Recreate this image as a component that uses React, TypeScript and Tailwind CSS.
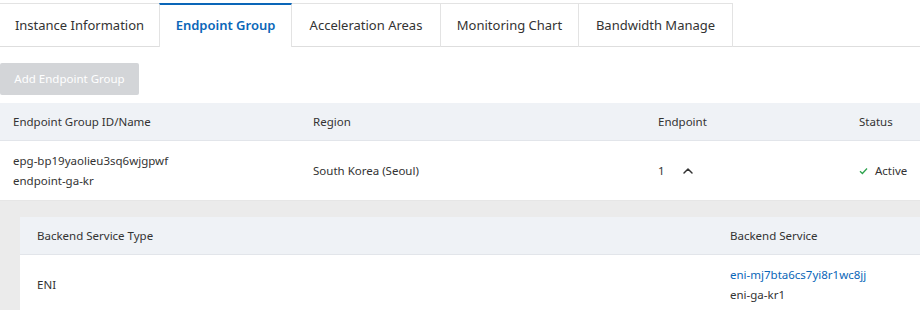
import { ChevronUp } from 'lucide-react';

const TABS = [
  { label: 'Instance Information', w: 'w-[159px]' },
  { label: 'Endpoint Group', w: 'w-[133px]' },
  { label: 'Acceleration Areas', w: 'w-[149px]' },
  { label: 'Monitoring Chart', w: 'w-[138px]' },
  { label: 'Bandwidth Manage', w: 'w-[154px]' },
];

export default function App() {
  const active = 1;

  return (
    <div className="w-[920px] h-[310px] overflow-hidden bg-white text-[#333] font-['Noto_Sans','Open_Sans',sans-serif]">
      {/* Tabs */}
      <div className="flex pt-[3px] border-b border-[#dedede] h-[47px]">
        {TABS.map((tab, i) => (
          <div
            key={tab.label}
            className={`${tab.w} h-[44px] flex items-center justify-center text-[13px] border-r border-[#e3e3e3] ${
              i === active
                ? 'border-t-2 border-t-[#0a66b8] text-[#0a66b8] font-semibold bg-white h-[44px] -mb-px border-l border-l-[#e3e3e3]'
                : 'border-t border-t-[#e3e3e3]'
            } ${i === active - 1 ? 'border-r-0' : ''}`}
          >
            {tab.label}
          </div>
        ))}
      </div>

      {/* Toolbar */}
      <div className="pt-4 pb-2">
        <button className="w-[139px] h-[32px] rounded-[2px] bg-[#d3d5d8] text-white text-[11.5px]">
          Add Endpoint Group
        </button>
      </div>

      {/* Main table */}
      <div className="text-[11.5px]">
        <div className="flex items-center h-[38px] bg-[#eff2f6] border-b border-[#e2e5ea]">
          <div className="w-[300px] pl-[13px]">Endpoint Group ID/Name</div>
          <div className="w-[345px] pl-[13px]">Region</div>
          <div className="w-[201px] pl-[13px]">Endpoint</div>
          <div className="flex-1 pl-[13px]">Status</div>
        </div>
        <div className="flex items-center h-[60px] border-b border-[#e6e6e6]">
          <div className="w-[300px] pl-[13px] leading-[20px]">
            <div>epg-bp19yaolieu3sq6wjgpwf</div>
            <div>endpoint-ga-kr</div>
          </div>
          <div className="w-[345px] pl-[13px]">South Korea (Seoul)</div>
          <div className="w-[201px] pl-[13px] flex items-center gap-[15px]">
            <span>1</span>
            <ChevronUp size={16} strokeWidth={2.2} className="text-[#333]" />
          </div>
          <div className="flex-1 pl-[13px] flex items-center gap-[7px]">
            <svg width="9" height="8" viewBox="0 0 9 8" fill="none">
              <path d="M1 4.2 L3.4 6.5 L8 1.5" stroke="#2ea44f" strokeWidth="1.3" />
            </svg>
            <span>Active</span>
          </div>
        </div>

        {/* Expanded area */}
        <div className="bg-[#ebebeb] pl-[20px] pt-[16px] h-[120px]">
          <div className="w-[920px] bg-white">
            <div className="flex items-center h-[38px] bg-[#eff2f6] border-b border-[#e2e5ea]">
              <div className="w-[693px] pl-[17px]">Backend Service Type</div>
              <div className="flex-1 pl-[17px]">Backend Service</div>
            </div>
            <div className="flex items-center h-[60px]">
              <div className="w-[693px] pl-[17px]">ENI</div>
              <div className="flex-1 pl-[17px] leading-[20px]">
                <div className="text-[#0a66b8]">eni-mj7bta6cs7yi8r1wc8jj</div>
                <div>eni-ga-kr1</div>
              </div>
            </div>
          </div>
        </div>
      </div>
    </div>
  );
}
